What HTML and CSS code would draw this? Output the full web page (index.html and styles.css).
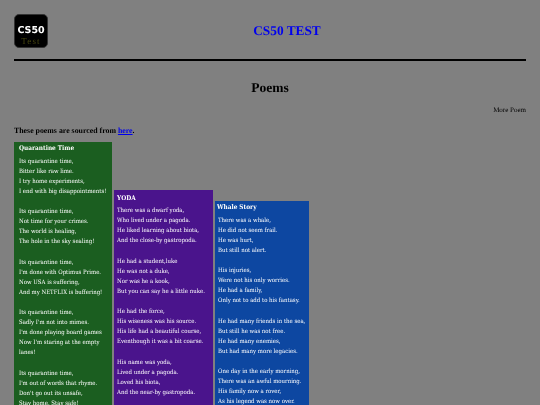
FILE: index.html
```html
<!DOCTYPE html>
<html lang="en">
<head>
    <meta charset="UTF-8">
    <meta name="viewport" content="width=device-width, initial-scale=1.0">
    <title>CS50 TEST</title>
    <link rel="stylesheet" href="styles.css">
</head>
<body>
    <header class="header">
        <div class="logo">
            <span class="logo-name">CS50</span>
            <span class="logo-sub">Test</span>
        </div>
        <a class="site-title" href="#">CS50 TEST</a>
    </header>
    <hr class="rule">

    <h2 class="page-title">Poems</h2>
    <div class="more"><a href="#">More Poem</a></div>
    <p class="source">These poems are sourced from <a href="#">here</a>.</p>

    <div class="poems">
        <div class="poem green">
            <h3>Quarantine Time</h3>
            <p>Its quarantine time,<br>Bitter like raw lime.<br>I try home experiments,<br>I end with big disappointments!</p>
            <p>Its quarantine time,<br>Not time for your crimes.<br>The world is healing,<br>The hole in the sky sealing!</p>
            <p>Its quarantine time,<br>I'm done with Optimus Prime.<br>Now USA is suffering,<br>And my NETFLIX is buffering!</p>
            <p>Its quarantine time,<br>Sadly I'm not into mimes.<br>I'm done playing board games<br>Now I'm staring at the empty<br>lanes!</p>
            <p>Its quarantine time,<br>I'm out of words that rhyme.<br>Don't go out its unsafe,<br>Stay home. Stay safe!</p>
        </div>
        <div class="poem purple">
            <h3>YODA</h3>
            <p>There was a dwarf yoda,<br>Who lived under a pagoda.<br>He liked learning about biota,<br>And the close-by gastropoda.</p>
            <p>He had a student,luke<br>He was not a duke,<br>Nor was he a kook,<br>But you can say he a little nuke.</p>
            <p>He had the force,<br>His wiseness was his source.<br>His life had a beautiful course,<br>Eventhough it was a bit coarse.</p>
            <p>His name was yoda,<br>Lived under a pagoda.<br>Loved his biota,<br>And the near-by gastropoda.</p>
        </div>
        <div class="poem blue">
            <h3>Whale Story</h3>
            <p>There was a whale,<br>He did not seem frail.<br>He was hurt,<br>But still not alert.</p>
            <p>His injuries,<br>Were not his only worries.<br>He had a family,<br>Only not to add to his fantasy.</p>
            <p>He had many friends in the sea,<br>But still he was not free.<br>He had many enemies,<br>But had many more legacies.</p>
            <p>One day in the early morning,<br>There was an awful mourning.<br>His family now a rover,<br>As his legend was now over.</p>
        </div>
    </div>
</body>
</html>
```

FILE: styles.css
```css
html, body {
    height: 405px;
    overflow: hidden;
}
body {
    margin: 0;
    padding: 14px 14px 0;
    background-color: #808080;
    font-family: "Liberation Serif", serif;
    color: #000;
    text-rendering: geometricPrecision;
    filter: blur(0.3px);
}
a {
    color: #0000ee;
}
.header {
    display: flex;
    align-items: center;
    height: 34px;
}
.logo {
    width: 34px;
    height: 34px;
    background: #000;
    border-radius: 5px;
    border: 1px solid #333;
    box-sizing: border-box;
    display: flex;
    flex-direction: column;
    align-items: center;
    padding-top: 10px;
}
.logo-name {
    color: #fff;
    font-family: "DejaVu Sans", sans-serif;
    font-weight: 700;
    font-size: 9.5px;
    line-height: 12px;
}
.logo-sub {
    color: #44440f;
    font-family: "Liberation Serif", serif;
    font-size: 9px;
    line-height: 9px;
    letter-spacing: 1.2px;
}
.site-title {
    flex: 1;
    text-align: center;
    font-size: 13.33px;
    font-weight: bold;
    text-decoration: none;
}
.rule {
    height: 2px;
    margin: 11px 0 0;
    background: #000;
    border: none;
}
.page-title {
    margin: 18px 0 0;
    text-align: center;
    font-size: 13.5px;
    line-height: 18px;
}
.more {
    margin-top: 8px;
    text-align: right;
    font-size: 7px;
    line-height: 10px;
}
.more a {
    color: #000;
    text-decoration: none;
}
.source {
    margin: 10px 0 0;
    font-size: 7.85px;
    font-weight: bold;
    line-height: 11px;
}
.poems {
    display: flex;
    align-items: flex-start;
    gap: 2px;
    margin-top: 6px;
}
.poem {
    color: #fff;
    box-sizing: border-box;
    font-family: "DejaVu Serif", "Liberation Serif", serif;
    font-stretch: condensed;
    font-size: 6px;
    line-height: 10.1px;
    white-space: nowrap;
}
.poem h3 {
    margin: 0;
    padding: 1px 0 3.7px;
    font-size: 6.45px;
    line-height: 10px;
}
.poem p {
    margin: 0 0 10.1px;
}
.green {
    width: 98px;
    padding: 0 5px;
    background: #1b5e20;
}
.purple {
    width: 99px;
    margin-top: 48px;
    padding: 1.5px 3px 0;
    background: #4a148c;
}
.blue {
    width: 94px;
    margin-top: 59px;
    padding: 0 4px 0 3px;
    background: #0d47a1;
}
.blue h3 {
    margin-left: -1px;
}
```
